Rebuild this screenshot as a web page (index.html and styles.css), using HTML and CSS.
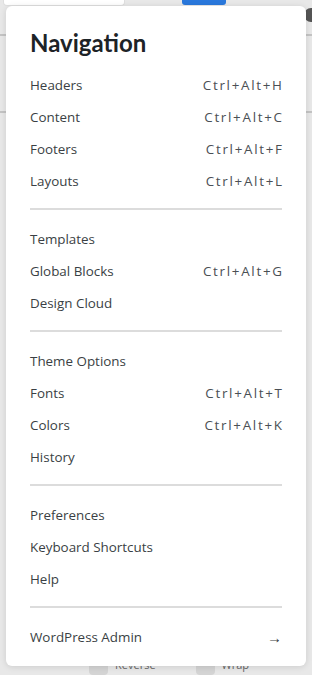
FILE: index.html
```html
<!DOCTYPE html>
<html lang="en">
<head>
    <meta charset="UTF-8">
    <meta name="viewport" content="width=device-width, initial-scale=1.0">
    <title>Navigation</title>
    <link rel="stylesheet" href="styles.css">
</head>
<body>
    <div class="workspace">
        <div class="toolbar">
            <div class="search-box"></div>
            <div class="primary-btn"></div>
            <div class="round-icon"></div>
        </div>
        <div class="rule first"></div>
        <div class="rule second"></div>
        <div class="options">
            <label class="option"><span class="check"></span>Reverse</label>
            <label class="option"><span class="check"></span>Wrap</label>
        </div>
    </div>

    <div class="menu">
        <h2 class="menu-title">Navigation</h2>

        <ul class="menu-group">
            <li><span>Headers</span><kbd>Ctrl+Alt+H</kbd></li>
            <li><span>Content</span><kbd>Ctrl+Alt+C</kbd></li>
            <li><span>Footers</span><kbd>Ctrl+Alt+F</kbd></li>
            <li><span>Layouts</span><kbd>Ctrl+Alt+L</kbd></li>
        </ul>
        <hr>
        <ul class="menu-group">
            <li><span>Templates</span></li>
            <li><span>Global Blocks</span><kbd>Ctrl+Alt+G</kbd></li>
            <li><span>Design Cloud</span></li>
        </ul>
        <hr>
        <ul class="menu-group">
            <li><span>Theme Options</span></li>
            <li><span>Fonts</span><kbd>Ctrl+Alt+T</kbd></li>
            <li><span>Colors</span><kbd>Ctrl+Alt+K</kbd></li>
            <li><span>History</span></li>
        </ul>
        <hr>
        <ul class="menu-group">
            <li><span>Preferences</span></li>
            <li><span>Keyboard Shortcuts</span></li>
            <li><span>Help</span></li>
        </ul>
        <hr>
        <ul class="menu-group">
            <li><span>WordPress Admin</span><span class="arrow">&rarr;</span></li>
        </ul>
    </div>
</body>
</html>
```

FILE: styles.css
```css
body {
    margin: 0;
    padding: 0;
    background-color: #e8e8e8;
    font-family: "Open Sans", Arial, sans-serif;
    color: #3a3f44;
    height: 675px;
    overflow: hidden;
    position: relative;
}

/* editor behind the popover */
.workspace {
    height: 675px;
    display: flex;
    flex-direction: column;
}

.toolbar {
    display: flex;
    align-items: flex-end;
    height: 6px;
    padding-left: 3px;
}

.search-box {
    width: 122px;
    height: 6px;
    background: #fff;
    border-radius: 0 0 4px 4px;
    border: 1px solid #dedede;
    border-top: none;
    box-sizing: border-box;
}

.primary-btn {
    width: 44px;
    height: 5px;
    margin-left: 57px;
    margin-bottom: 1px;
    background: #2a78dc;
    border-radius: 0 0 3px 3px;
}

.round-icon {
    width: 14px;
    height: 14px;
    margin-left: auto;
    margin-right: -6px;
    margin-bottom: -16px;
    border-radius: 50%;
    background: #555;
}

.rule {
    height: 2px;
    background: #c4c4c4;
}

.rule.first {
    margin-top: 28px;
}

.rule.second {
    margin-top: 75px;
}

.options {
    margin-top: auto;
    display: flex;
    gap: 40px;
    padding-left: 89px;
    height: 17px;
    font-size: 11px;
    color: #666;
}

.option {
    display: flex;
    gap: 7px;
    align-items: flex-start;
    line-height: 14px;
}

.check {
    width: 19px;
    height: 17px;
    background: #d4d4d4;
    border-radius: 4px;
}

/* popover */
.menu {
    position: absolute;
    top: 6px;
    left: 6px;
    width: 300px;
    box-sizing: border-box;
    padding: 23px 24px 13px;
    background: #fff;
    border-radius: 6px;
    box-shadow: 0 1px 6px rgba(0, 0, 0, 0.12);
}

.menu-title {
    margin: 0 0 12px;
    font-family: Lato, "Open Sans", sans-serif;
    font-weight: 700;
    font-size: 24px;
    line-height: 28px;
    color: #1d2327;
}

.menu-group {
    list-style: none;
    margin: 0;
    padding: 0;
}

.menu-group li {
    display: flex;
    justify-content: space-between;
    align-items: center;
    height: 32px;
    font-size: 13.4px;
    line-height: 32px;
}

.menu-group kbd {
    font-family: "Open Sans", Arial, sans-serif;
    font-size: 13.4px;
    letter-spacing: 1.7px;
    margin-right: -1.7px;
    color: #4a4f54;
}

.arrow {
    font-size: 15px;
    color: #3a3f44;
}

.menu hr {
    margin: 11px 0 13px;
    border: none;
    height: 2px;
    background: #dcdcdc;
}
```
